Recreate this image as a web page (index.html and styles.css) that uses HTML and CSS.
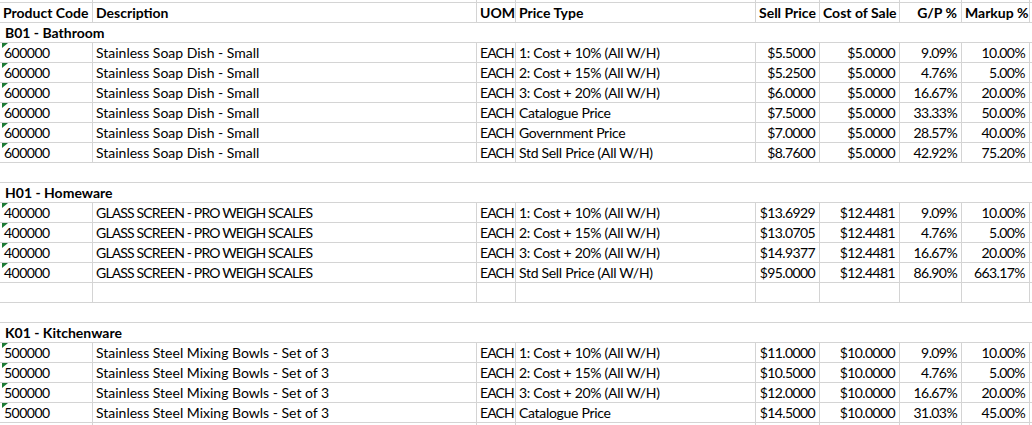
FILE: index.html
```html
<!DOCTYPE html>
<html>
<head>
<meta charset="utf-8">
<link rel="stylesheet" href="styles.css">
</head>
<body>
<div class="sheet">
  <div class="row edge-top"><div class="c"></div><div class="c"></div><div class="c"></div><div class="c"></div><div class="c"></div><div class="c"></div><div class="c"></div><div class="c"></div><div class="c"></div></div>

  <div class="row head">
    <div class="c">Product Code</div><div class="c">Description</div><div class="c">UOM</div><div class="c">Price Type</div><div class="c r">Sell Price</div><div class="c r">Cost of Sale</div><div class="c r">G/P %</div><div class="c r">Markup %</div><div class="c"></div>
  </div>

  <div class="row group"><div class="span">B01 - Bathroom</div></div>

  <div class="row"><div class="c code"><span class="flag"></span>600000</div><div class="c">Stainless Soap Dish - Small</div><div class="c caps">EACH</div><div class="c pt">1: Cost + 10% (All W/H)</div><div class="c r">$5.5000</div><div class="c r">$5.0000</div><div class="c r">9.09%</div><div class="c r">10.00%</div><div class="c"></div></div>
  <div class="row"><div class="c code"><span class="flag"></span>600000</div><div class="c">Stainless Soap Dish - Small</div><div class="c caps">EACH</div><div class="c pt">2: Cost + 15% (All W/H)</div><div class="c r">$5.2500</div><div class="c r">$5.0000</div><div class="c r">4.76%</div><div class="c r">5.00%</div><div class="c"></div></div>
  <div class="row"><div class="c code"><span class="flag"></span>600000</div><div class="c">Stainless Soap Dish - Small</div><div class="c caps">EACH</div><div class="c pt">3: Cost + 20% (All W/H)</div><div class="c r">$6.0000</div><div class="c r">$5.0000</div><div class="c r">16.67%</div><div class="c r">20.00%</div><div class="c"></div></div>
  <div class="row"><div class="c code"><span class="flag"></span>600000</div><div class="c">Stainless Soap Dish - Small</div><div class="c caps">EACH</div><div class="c pt">Catalogue Price</div><div class="c r">$7.5000</div><div class="c r">$5.0000</div><div class="c r">33.33%</div><div class="c r">50.00%</div><div class="c"></div></div>
  <div class="row"><div class="c code"><span class="flag"></span>600000</div><div class="c">Stainless Soap Dish - Small</div><div class="c caps">EACH</div><div class="c pt">Government Price</div><div class="c r">$7.0000</div><div class="c r">$5.0000</div><div class="c r">28.57%</div><div class="c r">40.00%</div><div class="c"></div></div>
  <div class="row"><div class="c code"><span class="flag"></span>600000</div><div class="c">Stainless Soap Dish - Small</div><div class="c caps">EACH</div><div class="c pt">Std Sell Price (All W/H)</div><div class="c r">$8.7600</div><div class="c r">$5.0000</div><div class="c r">42.92%</div><div class="c r">75.20%</div><div class="c"></div></div>

  <div class="row group"><div class="span"></div></div>
  <div class="row group"><div class="span">H01 - Homeware</div></div>

  <div class="row"><div class="c code"><span class="flag"></span>400000</div><div class="c caps">GLASS SCREEN - PRO WEIGH SCALES</div><div class="c caps">EACH</div><div class="c pt">1: Cost + 10% (All W/H)</div><div class="c r">$13.6929</div><div class="c r">$12.4481</div><div class="c r">9.09%</div><div class="c r">10.00%</div><div class="c"></div></div>
  <div class="row"><div class="c code"><span class="flag"></span>400000</div><div class="c caps">GLASS SCREEN - PRO WEIGH SCALES</div><div class="c caps">EACH</div><div class="c pt">2: Cost + 15% (All W/H)</div><div class="c r">$13.0705</div><div class="c r">$12.4481</div><div class="c r">4.76%</div><div class="c r">5.00%</div><div class="c"></div></div>
  <div class="row"><div class="c code"><span class="flag"></span>400000</div><div class="c caps">GLASS SCREEN - PRO WEIGH SCALES</div><div class="c caps">EACH</div><div class="c pt">3: Cost + 20% (All W/H)</div><div class="c r">$14.9377</div><div class="c r">$12.4481</div><div class="c r">16.67%</div><div class="c r">20.00%</div><div class="c"></div></div>
  <div class="row"><div class="c code"><span class="flag"></span>400000</div><div class="c caps">GLASS SCREEN - PRO WEIGH SCALES</div><div class="c caps">EACH</div><div class="c pt">Std Sell Price (All W/H)</div><div class="c r">$95.0000</div><div class="c r">$12.4481</div><div class="c r">86.90%</div><div class="c r">663.17%</div><div class="c"></div></div>

  <div class="row"><div class="c"></div><div class="c"></div><div class="c"></div><div class="c"></div><div class="c"></div><div class="c"></div><div class="c"></div><div class="c"></div><div class="c"></div></div>
  <div class="row group"><div class="span"></div></div>
  <div class="row group"><div class="span">K01 - Kitchenware</div></div>

  <div class="row"><div class="c code"><span class="flag"></span>500000</div><div class="c">Stainless Steel Mixing Bowls - Set of 3</div><div class="c caps">EACH</div><div class="c pt">1: Cost + 10% (All W/H)</div><div class="c r">$11.0000</div><div class="c r">$10.0000</div><div class="c r">9.09%</div><div class="c r">10.00%</div><div class="c"></div></div>
  <div class="row"><div class="c code"><span class="flag"></span>500000</div><div class="c">Stainless Steel Mixing Bowls - Set of 3</div><div class="c caps">EACH</div><div class="c pt">2: Cost + 15% (All W/H)</div><div class="c r">$10.5000</div><div class="c r">$10.0000</div><div class="c r">4.76%</div><div class="c r">5.00%</div><div class="c"></div></div>
  <div class="row"><div class="c code"><span class="flag"></span>500000</div><div class="c">Stainless Steel Mixing Bowls - Set of 3</div><div class="c caps">EACH</div><div class="c pt">3: Cost + 20% (All W/H)</div><div class="c r">$12.0000</div><div class="c r">$10.0000</div><div class="c r">16.67%</div><div class="c r">20.00%</div><div class="c"></div></div>
  <div class="row"><div class="c code"><span class="flag"></span>500000</div><div class="c">Stainless Steel Mixing Bowls - Set of 3</div><div class="c caps">EACH</div><div class="c pt">Catalogue Price</div><div class="c r">$14.5000</div><div class="c r">$10.0000</div><div class="c r">31.03%</div><div class="c r">45.00%</div><div class="c"></div></div>

  <div class="row"><div class="c"></div><div class="c"></div><div class="c"></div><div class="c"></div><div class="c"></div><div class="c"></div><div class="c"></div><div class="c"></div><div class="c"></div></div>
</div>
</body>
</html>
```
FILE: styles.css
```css
html, body {
  margin: 0;
  padding: 0;
  background: #ffffff;
  overflow: hidden;
}
.sheet {
  width: 1032px;
  font-family: Lato, "Liberation Sans", sans-serif;
  font-size: 14px;
  color: #000000;
}
.row {
  display: grid;
  grid-template-columns: 93px 384px 39px 240px 64px 80px 62px 68px 1fr;
  height: 20px;
  box-sizing: border-box;
  border-bottom: 1px solid #d4d4d4;
}
.row.edge-top {
  height: 3px;
}
.c {
  position: relative;
  box-sizing: border-box;
  border-right: 1px solid #d4d4d4;
  padding: 0 3px 0 3px;
  line-height: 19px;
  white-space: nowrap;
  overflow: hidden;
}
.c.r {
  text-align: right;
  padding-right: 4px;
  letter-spacing: -0.6px;
}
.c.caps {
  letter-spacing: -0.85px;
}
.c.pt {
  letter-spacing: -0.3px;
}
.head .c,
.group .span {
  font-weight: bold;
}
.head .c.r {
  letter-spacing: 0;
}
.group {
  display: block;
}
.span {
  padding: 0 5px;
  line-height: 19px;
  white-space: nowrap;
}
.c.code {
  padding-left: 4px;
  letter-spacing: -0.5px;
}
.flag {
  position: absolute;
  left: 2px;
  top: 0;
  width: 0;
  height: 0;
  border-top: 5px solid #1e7b34;
  border-right: 6px solid transparent;
}
```
